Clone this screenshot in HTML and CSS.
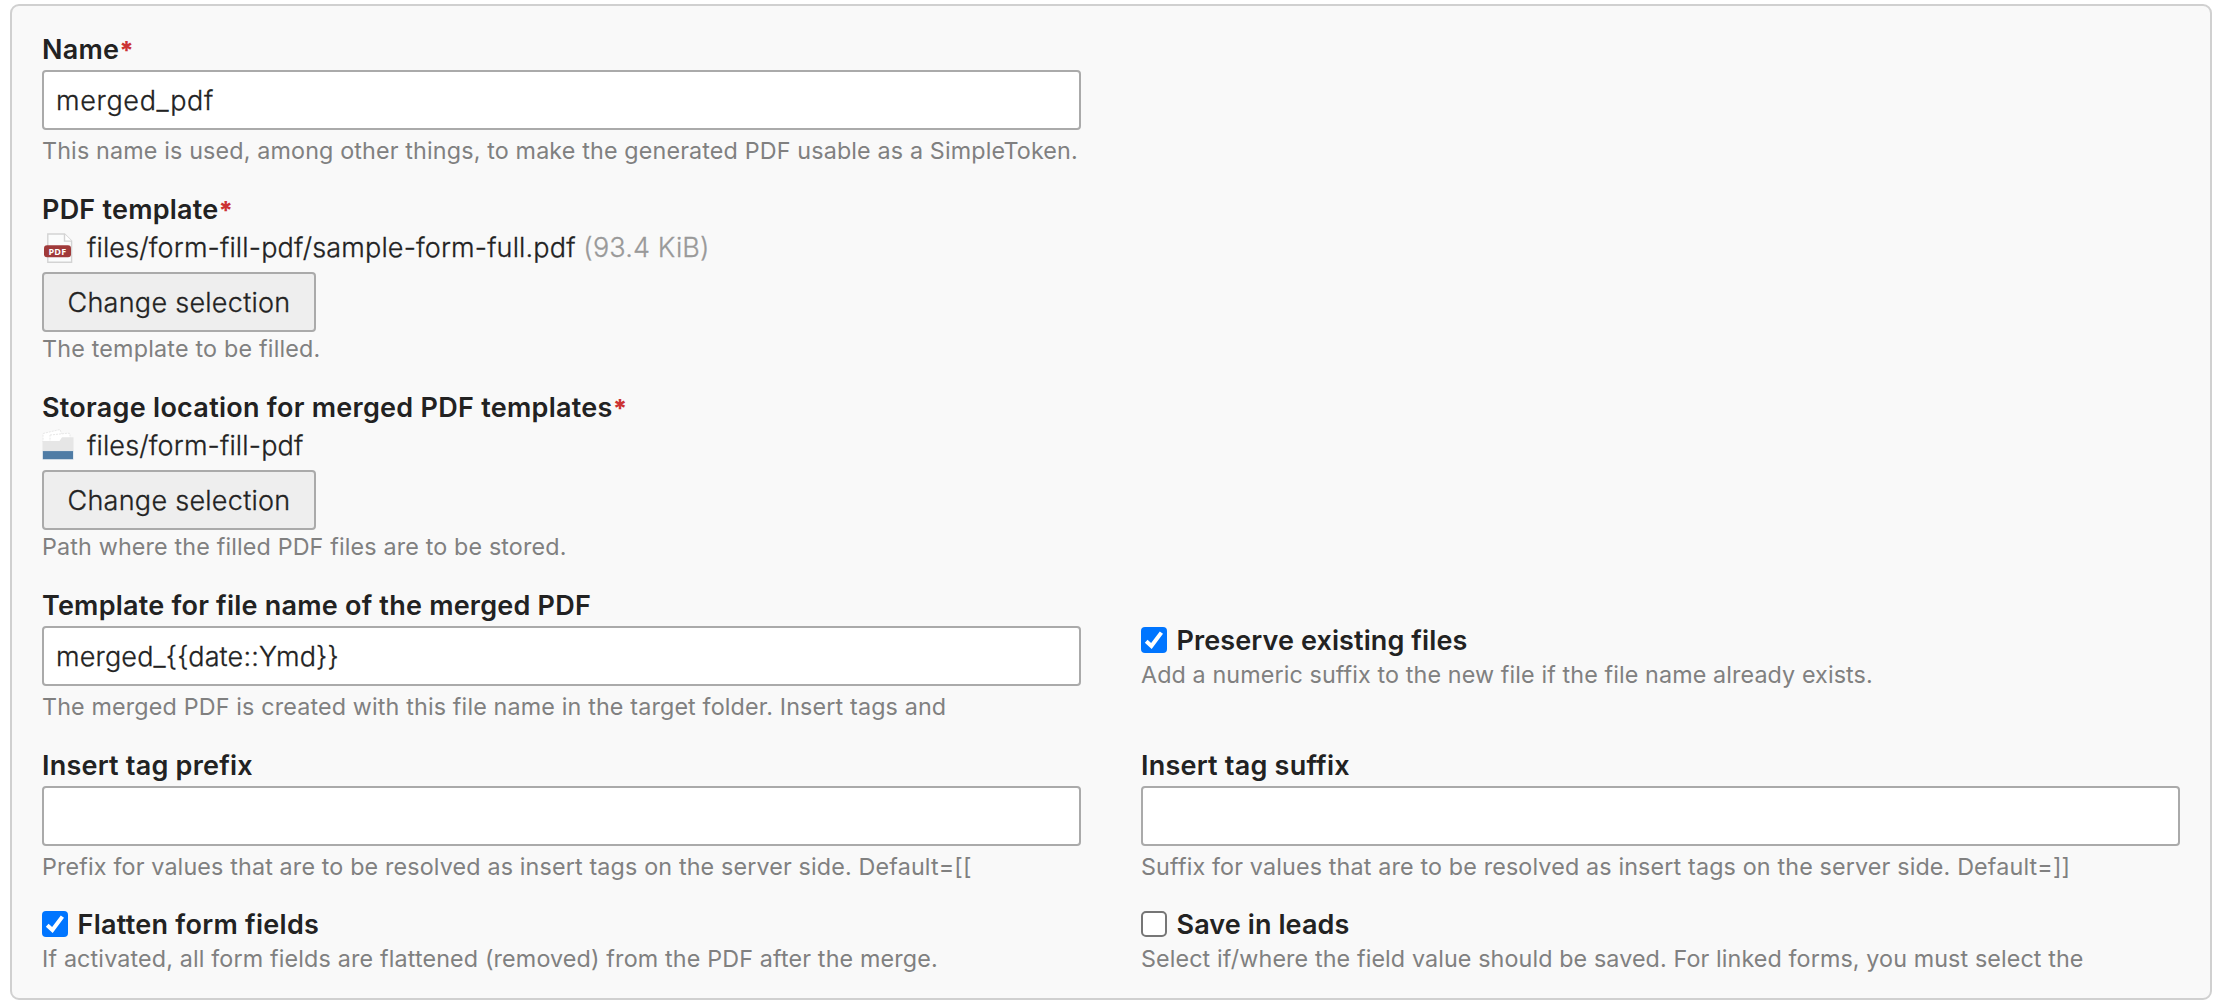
FILE: index.html
```
<!DOCTYPE html>
<html lang="en">
<head>
<meta charset="utf-8">
<title>Form field</title>
<link rel="stylesheet" href="styles.css">
</head>
<body>
<form class="panel">
  <div class="field">
    <label class="label" for="name">Name<span class="required">*</span></label>
    <input class="text-input text-input--name" id="name" type="text" value="merged_pdf">
    <p class="help">This name is used, among other things, to make the generated PDF usable as a SimpleToken.</p>
  </div>

  <div class="field field--picker">
    <div class="label">PDF template<span class="required">*</span></div>
    <div class="file">
      <svg class="file-icon" viewBox="0 0 32 34" aria-hidden="true">
        <path d="M5.8 4H22.5L29.6 11.1V32.2H5.8Z" fill="#fbfcfc" stroke="#d3d3d3" stroke-width="1.4"/>
        <path d="M22.5 4V11.1H29.6" fill="#fff" stroke="#d3d3d3" stroke-width="1.4"/>
        <rect x="2" y="15.2" width="27" height="12" rx="3" fill="#a03a3a"/>
        <text class="file-type" x="15.5" y="24.9" text-anchor="middle">PDF</text>
      </svg>
      <span class="path">files/form-fill-pdf/sample-form-full.pdf <span class="size">(93.4 KiB)</span></span>
    </div>
    <button class="button" type="button">Change selection</button>
    <p class="help help--wide">The template to be filled.</p>
  </div>

  <div class="field field--picker">
    <div class="label label--storage">Storage location for merged PDF templates<span class="required">*</span></div>
    <div class="file">
      <svg class="file-icon" viewBox="0 0 32 34" aria-hidden="true">
        <path d="M1 5.5L18 1.5L19.5 5.5V14H1Z" fill="#fff" stroke="#e8e8e8" stroke-width="1" stroke-dasharray="2 1"/>
        <path d="M8 7L26 5.2L28 5.5V14H8Z" fill="#fff" stroke="#e8e8e8" stroke-width="1" stroke-dasharray="2 1"/>
        <path d="M0.5 13H17.5L20 9.2H31.5V24H0.5Z" fill="#e6e6e6"/>
        <path d="M0.5 22.8H31.6V31.8H0.5Z" fill="#d3dfe9"/>
        <path d="M0.9 23.1H31V31.1H0.9Z" fill="#4f7ca5"/>
      </svg>
      <span class="path">files/form-fill-pdf</span>
    </div>
    <button class="button" type="button">Change selection</button>
    <p class="help">Path where the filled PDF files are to be stored.</p>
  </div>

  <div class="field field--start">
    <label class="label" for="filename">Template for file name of the merged PDF</label>
    <input class="text-input" id="filename" type="text" value="merged_{{date::Ymd}}">
    <p class="help">The merged PDF is created with this file name in the target folder. Insert tags and</p>
  </div>
  <div class="field field--check field--offset">
    <label class="check-row"><input class="check" type="checkbox" checked><span class="check-mark"><svg viewBox="0 0 26 26" aria-hidden="true"><path d="M5.2 14.2L10.4 19L20.4 5.6"/></svg></span><span class="check-label">Preserve existing files</span></label>
    <p class="help help--tight">Add a numeric suffix to the new file if the file name already exists.</p>
  </div>

  <div class="field field--start">
    <label class="label" for="prefix">Insert tag prefix</label>
    <input class="text-input" id="prefix" type="text">
    <p class="help">Prefix for values that are to be resolved as insert tags on the server side. Default=[[</p>
  </div>
  <div class="field">
    <label class="label" for="suffix">Insert tag suffix</label>
    <input class="text-input" id="suffix" type="text">
    <p class="help">Suffix for values that are to be resolved as insert tags on the server side. Default=]]</p>
  </div>

  <div class="field field--check field--start">
    <label class="check-row"><input class="check" type="checkbox" checked><span class="check-mark"><svg viewBox="0 0 26 26" aria-hidden="true"><path d="M5.2 14.2L10.4 19L20.4 5.6"/></svg></span><span class="check-label check-label--flatten">Flatten form fields</span></label>
    <p class="help">If activated, all form fields are flattened (removed) from the PDF after the merge.</p>
  </div>
  <div class="field field--check">
    <label class="check-row"><input class="check" type="checkbox"><span class="check-mark"></span><span class="check-label">Save in leads</span></label>
    <p class="help help--tight">Select if/where the field value should be saved. For linked forms, you must select the</p>
  </div>
</form>
</body>
</html>
```

FILE: styles.css
```
* {
  box-sizing: border-box;
}

body {
  margin: 0;
  padding: 4px 10px 8px;
  background: #fff;
  color: #222;
  font-family: Inter, "Liberation Sans", sans-serif;
  font-size: 27px;
  font-weight: 300;
}

.panel {
  display: grid;
  grid-template-columns: 1fr 1fr;
  column-gap: 60px;
  row-gap: 26px;
  align-content: start;
  height: 996px;
  padding: 26px 30px 24px;
  background: #f9f9f9;
  border: 2px solid #d0d0d0;
  border-radius: 9px;
}

.field {
  display: flex;
  flex-direction: column;
  align-items: flex-start;
  min-width: 0;
}

.field:first-child,
.field--picker,
.field--start {
  grid-column-start: 1;
}

.label {
  margin-bottom: 2px;
  line-height: 36px;
  font-weight: 600;
  letter-spacing: 0.22px;
}

.label--storage {
  letter-spacing: 0.27px;
}

.required {
  color: #cc3333;
  font-size: 25px;
  font-weight: 800;
}

.text-input,
.path,
.button {
  -webkit-text-stroke: 0.3px currentColor;
}

.text-input {
  width: 100%;
  height: 60px;
  padding: 0 12px;
  border: 2px solid #aaa;
  border-radius: 4px;
  background: #fff;
  color: #222;
  font: inherit;
  letter-spacing: 0.15px;
}

.text-input--name {
  letter-spacing: 0.65px;
}

.help {
  margin: 6px 0 0;
  color: #808080;
  font-size: 23.3px;
  font-weight: 400;
  line-height: 30px;
  letter-spacing: 0.15px;
  white-space: nowrap;
}

.help--tight {
  letter-spacing: 0.11px;
}

.help--wide {
  letter-spacing: 0.2px;
}

.field--picker .help {
  margin-top: 2px;
}

.file {
  display: flex;
  align-items: center;
  gap: 13px;
  height: 34px;
  margin-bottom: 8px;
}

.file-icon {
  width: 32px;
  height: 34px;
}

.file-type {
  fill: #fff;
  font-family: "Open Sans", sans-serif;
  font-size: 9px;
  font-weight: 700;
  letter-spacing: 0.3px;
}

.path {
  padding-top: 2px;
  line-height: 34px;
  letter-spacing: 0.15px;
}

.size {
  color: #999;
}

.button {
  width: 274px;
  height: 60px;
  padding: 0;
  border: 2px solid #aaa;
  border-radius: 4px;
  background: #eee;
  color: #222;
  font: inherit;
  letter-spacing: 0.27px;
}

.field--offset {
  margin-top: 36px;
}

.check-row {
  display: flex;
  align-items: center;
  gap: 9.5px;
  height: 32px;
}

.check {
  position: absolute;
  opacity: 0;
}

.check-mark {
  width: 26px;
  height: 26px;
  border: 2px solid #767676;
  border-radius: 5px;
  background: #fff;
}

.check:checked + .check-mark {
  border: 0;
  border-radius: 4px;
  background: #0075ff;
}

.check-mark svg {
  display: block;
  width: 26px;
  height: 26px;
  fill: none;
  stroke: #fff;
  stroke-width: 4;
}

.check-label {
  padding-top: 2px;
  line-height: 32px;
  font-weight: 600;
  letter-spacing: 0.1px;
}

.check-label--flatten {
  letter-spacing: 0.27px;
}

.field--check .help {
  margin-top: 4px;
}
```
